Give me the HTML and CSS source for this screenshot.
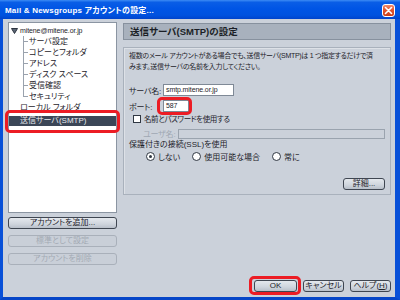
FILE: index.html
```html
<!DOCTYPE html>
<html lang="ja">
<head>
  <meta charset="UTF-8">
  <title>Mail &amp; Newsgroups アカウントの設定</title>
  <link rel="stylesheet" href="styles.css">
</head>
<body>
  <div class="window">
    <div class="titlebar">
      <span class="title">Mail &amp; Newsgroups アカウントの設定...</span>
      <span class="close-btn">
        <svg width="9" height="9" viewBox="0 0 9 9"><path d="M1.5 1.5L7.5 7.5M7.5 1.5L1.5 7.5" stroke="#fff" stroke-width="1.6" stroke-linecap="round"/></svg>
      </span>
    </div>

    <div class="client">
      <div class="main">
        <div class="sidebar">
          <div class="tree">
            <div class="tree-row account">
              <svg class="twisty" width="7" height="6" viewBox="0 0 7 6"><path d="M0.5 0.5H6.5L3.5 5.5Z" fill="#5b6675" stroke="#2d3540" stroke-width="1" stroke-linejoin="round"/></svg>
              <span class="latin">mitene@mitene.or.jp</span>
            </div>
            <ul class="tree-children">
              <li>サーバ設定</li>
              <li>コピーとフォルダ</li>
              <li>アドレス</li>
              <li>ディスク スペース</li>
              <li>受信確認</li>
              <li>セキュリティ</li>
            </ul>
            <div class="tree-row">ローカル フォルダ</div>
            <div class="tree-row selected marked">送信サーバ(SMTP)</div>
          </div>
          <button class="btn side-btn">アカウントを追加...</button>
          <button class="btn side-btn" disabled>標準として設定</button>
          <button class="btn side-btn" disabled>アカウントを削除</button>
        </div>

        <div class="panel">
          <div class="panel-title">送信サーバ(SMTP)の設定</div>
          <div class="group">
            <p class="desc">複数のメール アカウントがある場合でも、送信サーバ(SMTP)は 1 つ指定するだけで済<br>みます。送信サーバの名前を入力してください。</p>

            <div class="fields">
              <label class="field-label">サーバ名:</label>
              <span class="textbox server"><span class="latin">smtp.mitene.or.jp</span></span>
              <label class="field-label">ポート:</label>
              <span class="textbox port marked"><span class="latin">587</span></span>
            </div>

            <div class="check-row">
              <span class="checkbox"></span>
              <span>名前とパスワードを使用する</span>
            </div>

            <div class="user-row">
              <label class="field-label disabled">ユーザ名:</label>
              <span class="textbox user"></span>
            </div>

            <div class="ssl-label">保護付きの接続(SSL)を使用</div>
            <div class="radio-row">
              <span class="radio checked"></span><span class="radio-text">しない</span>
              <span class="radio"></span><span class="radio-text">使用可能な場合</span>
              <span class="radio"></span><span class="radio-text">常に</span>
            </div>

            <button class="btn details-btn">詳細...</button>
          </div>
        </div>
      </div>

      <div class="footer">
        <button class="btn ok-btn marked">OK</button>
        <button class="btn cancel-btn">キャンセル</button>
        <button class="btn help-btn">ヘルプ(<u>H</u>)</button>
      </div>
    </div>
  </div>
</body>
</html>
```

FILE: styles.css
```css
body {
  margin: 0;
  padding: 0;
  background-color: #cbd1da;
  font-family: 'Liberation Sans', 'Noto Sans CJK JP', sans-serif;
  font-feature-settings: "palt";
  font-size: 8px;
  color: #1e232a;
}

.latin {
  font-family: 'Liberation Sans', sans-serif;
  font-size: 7px;
  letter-spacing: -0.1px;
}

.window {
  width: 400px;
  height: 300px;
  display: flex;
  flex-direction: column;
}

/* title bar */
.titlebar {
  height: 19px;
  flex: none;
  display: flex;
  align-items: center;
  justify-content: space-between;
  padding: 0 5px;
  background: linear-gradient(to bottom, #3d8cf5 0%, #0a5ee6 12%, #0055e5 45%, #0052df 80%, #0044cc 100%);
}

.title {
  color: #fff;
  font-weight: bold;
  font-size: 8px;
  letter-spacing: 0.2px;
}

.close-btn {
  width: 11px;
  height: 11px;
  margin-top: 1px;
  display: flex;
  align-items: center;
  justify-content: center;
  border: 1px solid #fff;
  border-radius: 3px;
  background: linear-gradient(to bottom, #f08a6b 0%, #e2552f 45%, #c93d18 100%);
}

/* window body */
.client {
  flex: 1;
  display: flex;
  flex-direction: column;
  padding: 3px 4px 5px 5px;
  border-left: 3px solid #0850d8;
  border-right: 5px solid #0850d8;
  border-bottom: 3px solid #0646c8;
}

.main {
  display: flex;
  gap: 6px;
}

/* left column */
.sidebar {
  width: 109px;
  flex: none;
  display: flex;
  flex-direction: column;
}

.tree {
  height: 187px;
  padding-top: 2px;
  background-color: #fff;
  border: 1px solid #8b95a2;
  margin-bottom: 4px;
}

.tree-row {
  height: 11px;
  line-height: 11px;
  padding-left: 11px;
  white-space: nowrap;
}

.tree-row.account {
  display: flex;
  align-items: center;
  padding-left: 2px;
}

.twisty {
  margin-right: 2px;
}

.tree-children {
  list-style: none;
  margin: 0 0 0 14px;
  padding: 0;
}

.tree-children li {
  height: 11px;
  line-height: 11px;
  padding-left: 6px;
  white-space: nowrap;
  background:
    linear-gradient(#9aa2ad, #9aa2ad) no-repeat 0 50% / 5px 1px,
    linear-gradient(#9aa2ad, #9aa2ad) no-repeat 0 0 / 1px 100%;
}

.tree-children li:last-child {
  background:
    linear-gradient(#9aa2ad, #9aa2ad) no-repeat 0 50% / 5px 1px,
    linear-gradient(#9aa2ad, #9aa2ad) no-repeat 0 0 / 1px 50%;
}

.tree-row.selected {
  margin-top: 3px;
  height: 10px;
  line-height: 10px;
  background-color: #3b4657;
  color: #e8ebf0;
}

/* red annotation frames */
.marked {
  position: relative;
}

.marked::after {
  content: "";
  position: absolute;
  border: 3px solid #ec1c24;
  border-radius: 5px;
  pointer-events: none;
}

.tree-row.marked::after {
  top: -6px;
  bottom: -7px;
  left: -4px;
  right: -4px;
}

.textbox.port::after {
  top: -4px;
  bottom: -4px;
  left: -7px;
  right: -4px;
}

.ok-btn.marked::after {
  top: -5px;
  bottom: -4px;
  left: -6px;
  right: -5px;
}

/* buttons */
.btn {
  font-family: inherit;
  font-feature-settings: "palt";
  font-size: 8px;
  color: #1e232a;
  height: 12px;
  padding: 0;
  line-height: 10px;
  border: 1px solid #3f4651;
  border-radius: 3px;
  background: linear-gradient(to bottom, #e4e8ed 0%, #cfd5dd 60%, #b9c0ca 100%);
}

.btn:disabled {
  color: #a3aab4;
  border-color: #a9b0ba;
  background: #c9cfd8;
}

.side-btn {
  width: 109px;
  margin-bottom: 6px;
}

/* right panel */
.panel {
  width: 268px;
  flex: none;
  display: flex;
  flex-direction: column;
  padding-top: 1px;
}

.panel-title {
  height: 15px;
  line-height: 15px;
  padding-left: 6px;
  font-size: 9.5px;
  font-weight: bold;
  color: #1b1f26;
  background-color: #a8b1bd;
  border: 1px solid #87919e;
  margin-bottom: 7px;
}

.group {
  display: flex;
  flex-direction: column;
  padding: 2px 5px 4px 5px;
  border: 1px solid #a9b1bc;
  box-shadow: inset 1px 1px 0 #dde1e7;
}

.desc {
  margin: 0;
  line-height: 11px;
  font-size: 7px;
  letter-spacing: -0.3px;
  white-space: nowrap;
}

.fields {
  display: grid;
  grid-template-columns: 34px auto;
  row-gap: 4px;
  align-items: center;
  margin-top: 12px;
  justify-items: start;
}

.field-label {
  white-space: nowrap;
  letter-spacing: -0.2px;
}

.field-label.disabled {
  color: #a0a8b3;
}

.textbox {
  display: block;
  height: 10px;
  line-height: 10px;
  padding: 0 2px;
  background-color: #fff;
  border: 1px solid #7f8996;
  white-space: nowrap;
  overflow: hidden;
}

.textbox.server {
  width: 65px;
}

.textbox.port {
  width: 20px;
  overflow: visible;
}

.check-row {
  display: flex;
  align-items: center;
  height: 11px;
  margin-top: 1px;
  padding-left: 4px;
  font-size: 7.5px;
  letter-spacing: -0.4px;
}

.checkbox {
  width: 6px;
  height: 6px;
  margin-right: 3px;
  background-color: #fff;
  border: 1px solid #2f3742;
}

.user-row {
  display: flex;
  align-items: center;
  height: 11px;
  margin-top: 4px;
  padding-left: 14px;
}

.user-row .field-label {
  width: 35px;
}

.textbox.user {
  flex: 1;
  height: 8px;
  background-color: #cbd1da;
  border-color: #9aa3ae;
}

.ssl-label {
  height: 11px;
  line-height: 11px;
}

.radio-row {
  display: flex;
  align-items: center;
  height: 11px;
  margin-top: 1px;
  padding-left: 17px;
}

.radio {
  width: 7px;
  height: 7px;
  margin-right: 3px;
  border: 1px solid #2f3742;
  border-radius: 50%;
  background-color: #fff;
  display: flex;
  align-items: center;
  justify-content: center;
}

.radio.checked::before {
  content: "";
  width: 3px;
  height: 3px;
  border-radius: 50%;
  background-color: #2f3742;
}

.radio-text {
  margin-right: 12px;
}

.details-btn {
  align-self: flex-end;
  width: 42px;
  margin-top: 16px;
}

/* bottom buttons */
.footer {
  margin-top: auto;
  display: flex;
  justify-content: flex-end;
  gap: 6px;
}

.ok-btn {
  width: 43px;
}

.cancel-btn {
  width: 41px;
}

.help-btn {
  width: 41px;
}
```
